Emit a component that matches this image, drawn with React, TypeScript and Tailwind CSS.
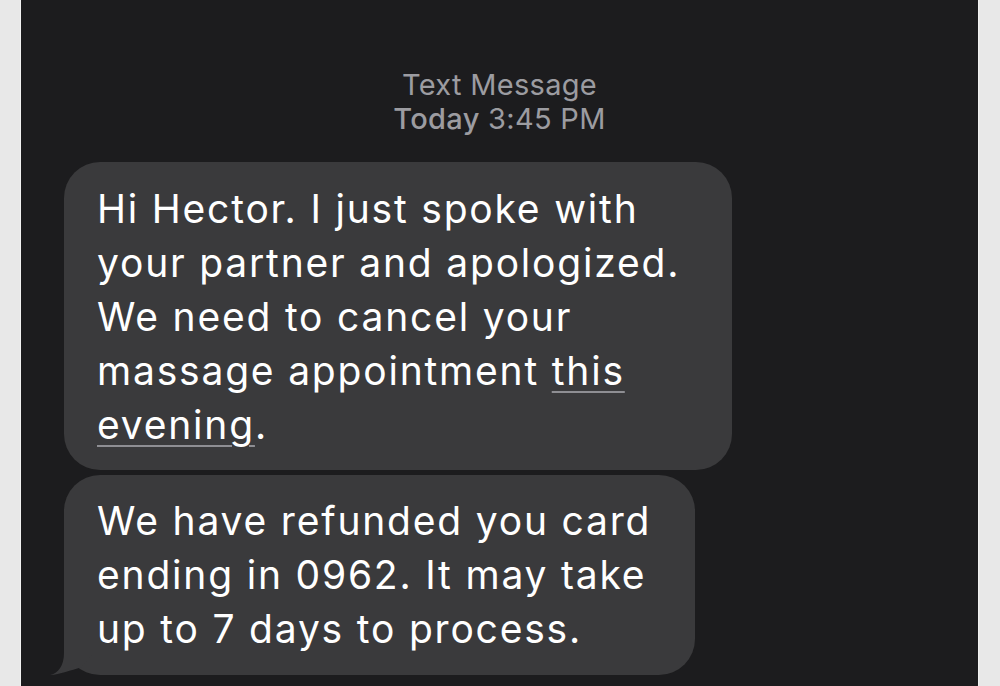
const font = { fontFamily: "Inter, 'Noto Sans', sans-serif" };

const Tail = () => (
  <svg
    className="absolute left-[-14px] bottom-0"
    width="44"
    height="40"
    viewBox="0 0 44 40"
  >
    <path
      d="M0 40 C8 38.5 14 31 14 18 L14 0 L42 0 L42 20 L31 32.5 C21 35 10 39.5 0 40 Z"
      fill="#3a3a3c"
    />
  </svg>
);

export default function App() {
  return (
    <div className="w-[1000px] h-[686px] overflow-hidden bg-[#e8e8e8] pl-[20px]" style={font}>
      <div className="w-[959px] h-[730px] bg-[#1c1c1e] rounded-b-[46px] border-x border-[#f2f2f2]">
        <div className="pt-[68px] text-center text-[#9c9ca1] text-[29px] leading-[34px] tracking-[0.3px]">
          <div>Text Message</div>
          <div>
            <span className="font-medium">Today</span> 3:45 PM
          </div>
        </div>

        <div className="mt-[26px] pl-[43px] text-white text-[39px] leading-[54px] tracking-[1.8px]">
          <div className="w-[668px] h-[308px] rounded-[36px] bg-[#3a3a3c] pl-[33px] pt-[20px]">
            Hi Hector. I just spoke with
            <br />
            your partner and apologized.
            <br />
            We need to cancel your
            <br />
            massage appointment{" "}
            <span className="underline decoration-[#8e8e93] decoration-2 underline-offset-[6px]">this</span>
            <br />
            <span className="underline decoration-[#8e8e93] decoration-2 underline-offset-[6px]">evening</span>.
          </div>

          <div className="relative mt-[5px] w-[631px] h-[200px] rounded-[36px] bg-[#3a3a3c] pl-[33px] pt-[19px]">
            <Tail />
            <div className="relative">
              We have refunded you card
              <br />
              ending in 0962. It may take
              <br />
              up to 7 days to process.
            </div>
          </div>
        </div>
      </div>
    </div>
  );
}
